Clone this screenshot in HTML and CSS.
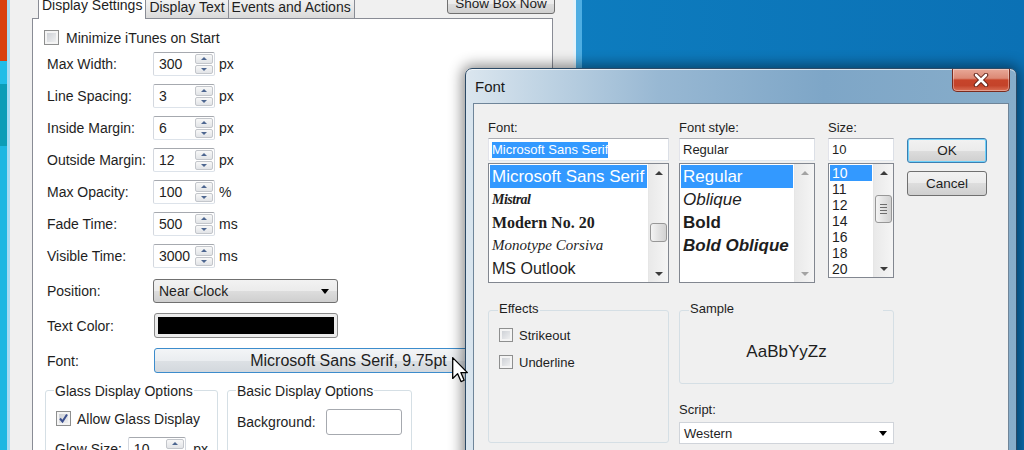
FILE: index.html
```html
<!DOCTYPE html>
<html lang="en">
<head>
    <meta charset="UTF-8">
    <meta name="viewport" content="width=device-width, initial-scale=1.0">
    <title>Display Settings - Font</title>
    <link rel="stylesheet" href="styles.css">
</head>
<body>
<div class="desktop">
    <div class="side-strip"></div>

    <div class="main-window">
        <div class="tab-row">
            <div class="tab active">Display Settings</div>
            <div class="tab">Display Text</div>
            <div class="tab">Events and Actions</div>
            <div class="btn show-box">Show Box Now</div>
        </div>
        <div class="tab-panel">
            <div class="check-row"><span class="checkbox"></span><span>Minimize iTunes on Start</span></div>
            <div class="field-row">
                <span class="field-label">Max Width:</span>
                <span class="spin"><span class="spin-value">300</span><span class="spin-buttons"><i class="up"></i><i class="down"></i></span></span>
                <span class="unit">px</span>
            </div>
            <div class="field-row">
                <span class="field-label">Line Spacing:</span>
                <span class="spin"><span class="spin-value">3</span><span class="spin-buttons"><i class="up"></i><i class="down"></i></span></span>
                <span class="unit">px</span>
            </div>
            <div class="field-row">
                <span class="field-label">Inside Margin:</span>
                <span class="spin"><span class="spin-value">6</span><span class="spin-buttons"><i class="up"></i><i class="down"></i></span></span>
                <span class="unit">px</span>
            </div>
            <div class="field-row">
                <span class="field-label">Outside Margin:</span>
                <span class="spin"><span class="spin-value">12</span><span class="spin-buttons"><i class="up"></i><i class="down"></i></span></span>
                <span class="unit">px</span>
            </div>
            <div class="field-row">
                <span class="field-label">Max Opacity:</span>
                <span class="spin"><span class="spin-value">100</span><span class="spin-buttons"><i class="up"></i><i class="down"></i></span></span>
                <span class="unit">%</span>
            </div>
            <div class="field-row">
                <span class="field-label">Fade Time:</span>
                <span class="spin"><span class="spin-value">500</span><span class="spin-buttons"><i class="up"></i><i class="down"></i></span></span>
                <span class="unit">ms</span>
            </div>
            <div class="field-row">
                <span class="field-label">Visible Time:</span>
                <span class="spin"><span class="spin-value">3000</span><span class="spin-buttons"><i class="up"></i><i class="down"></i></span></span>
                <span class="unit">ms</span>
            </div>
            <div class="field-row gap-lg">
                <span class="field-label">Position:</span>
                <span class="combo"><span>Near Clock</span><i class="drop-arrow"></i></span>
            </div>
            <div class="field-row tall">
                <span class="field-label">Text Color:</span>
                <span class="swatch"><span class="swatch-fill"></span></span>
            </div>
            <div class="field-row tall">
                <span class="field-label">Font:</span>
                <span class="btn font-btn">Microsoft Sans Serif, 9.75pt</span>
            </div>

            <div class="group-row">
                <div class="group glass">
                    <span class="group-title">Glass Display Options</span>
                    <div class="check-row">
                        <span class="checkbox"><svg width="13" height="13" viewBox="0 0 13 13"><path d="M3 6.5 L5.5 9.5 L10 2.5" fill="none" stroke="#3b4f8e" stroke-width="2"/></svg></span>
                        <span>Allow Glass Display</span>
                    </div>
                    <div class="field-row">
                        <span class="glow-label">Glow Size:</span>
                        <span class="spin narrow"><span class="spin-value">10</span><span class="spin-buttons"><i class="up"></i><i class="down"></i></span></span>
                        <span class="unit wide">px</span>
                    </div>
                </div>
                <div class="group basic">
                    <span class="group-title">Basic Display Options</span>
                    <div class="field-row">
                        <span class="bg-label">Background:</span>
                        <span class="textbox bg-box"></span>
                    </div>
                </div>
            </div>
        </div>
    </div>

    <div class="font-dialog">
        <div class="title-bar">
            <span class="title">Font</span>
            <span class="close-btn">
                <svg width="20" height="14" viewBox="0 0 20 14">
                    <path d="M5 2 L15 12 M15 2 L5 12" stroke="#5b1c12" stroke-width="4.5" stroke-linecap="round"/>
                    <path d="M5 2 L15 12 M15 2 L5 12" stroke="#ffffff" stroke-width="2.6" stroke-linecap="round"/>
                </svg>
            </span>
        </div>
        <div class="client">
            <div class="top-section">
                <div class="col col-font">
                    <div class="dlg-label">Font:</div>
                    <div class="dlg-input"><span class="sel-text">Microsoft Sans Serif</span></div>
                    <div class="listbox">
                        <div class="list-items">
                            <div class="item selected">Microsoft Sans Serif</div>
                            <div class="item f-mistral">Mistral</div>
                            <div class="item f-modern">Modern No. 20</div>
                            <div class="item f-corsiva">Monotype Corsiva</div>
                            <div class="item f-outlook">MS Outlook</div>
                        </div>
                        <div class="scrollbar">
                            <span class="sb-btn"><i class="sb-up"></i></span>
                            <span class="sb-track"><span class="sb-thumb font-thumb"></span></span>
                            <span class="sb-btn"><i class="sb-down"></i></span>
                        </div>
                    </div>
                </div>

                <div class="col col-style">
                    <div class="dlg-label">Font style:</div>
                    <div class="dlg-input">Regular</div>
                    <div class="listbox">
                        <div class="list-items">
                            <div class="item selected">Regular</div>
                            <div class="item s-oblique">Oblique</div>
                            <div class="item s-bold">Bold</div>
                            <div class="item s-bold s-oblique">Bold Oblique</div>
                        </div>
                        <div class="scrollbar disabled">
                            <span class="sb-btn"><i class="sb-up"></i></span>
                            <span class="sb-track"></span>
                            <span class="sb-btn"><i class="sb-down"></i></span>
                        </div>
                    </div>
                </div>

                <div class="col col-size">
                    <div class="dlg-label">Size:</div>
                    <div class="dlg-input">10</div>
                    <div class="listbox size-list">
                        <div class="list-items">
                            <div class="item selected">10</div>
                            <div class="item">11</div>
                            <div class="item">12</div>
                            <div class="item">14</div>
                            <div class="item">16</div>
                            <div class="item">18</div>
                            <div class="item">20</div>
                        </div>
                        <div class="scrollbar">
                            <span class="sb-btn"><i class="sb-up"></i></span>
                            <span class="sb-track"><span class="sb-thumb size-thumb"><b></b><b></b><b></b><b></b></span></span>
                            <span class="sb-btn"><i class="sb-down"></i></span>
                        </div>
                    </div>
                </div>

                <div class="col col-buttons">
                    <div class="btn dlg-btn default">OK</div>
                    <div class="btn dlg-btn">Cancel</div>
                </div>
            </div>

            <div class="bottom-section">
                <div class="group effects">
                    <span class="group-title">Effects</span>
                    <div class="check-row"><span class="checkbox small"></span><span>Strikeout</span></div>
                    <div class="check-row"><span class="checkbox small"></span><span>Underline</span></div>
                </div>
                <div class="sample-col">
                    <div class="group sample">
                        <span class="group-title">Sample</span>
                        <div class="sample-text">AaBbYyZz</div>
                    </div>
                    <div class="dlg-label script-label">Script:</div>
                    <div class="script-select"><span>Western</span><i class="drop-arrow"></i></div>
                </div>
            </div>
        </div>
    </div>

    <svg class="cursor" width="17" height="26" viewBox="0 0 13 20">
        <path d="M0.5 0.5 L0.5 16.5 L4.3 12.8 L6.9 18.9 L9.3 17.9 L6.8 12 L11.8 12 Z" fill="#ffffff" stroke="#000000" stroke-width="1" stroke-linejoin="round"/>
    </svg>
</div>
</body>
</html>
```

FILE: styles.css
```css
* {
    box-sizing: border-box;
}

body {
    margin: 0;
    font-family: "Liberation Sans", Arial, sans-serif;
    font-size: 14px;
    color: #1e1e1e;
}

.desktop {
    position: relative;
    width: 1024px;
    height: 450px;
    overflow: hidden;
    background: linear-gradient(90deg, #1189ca 0%, #0e80c2 40%, #0b71b5 100%);
}

.side-strip {
    position: absolute;
    left: 0;
    top: 0;
    width: 8px;
    height: 100%;
    background: linear-gradient(#d9410f 0, #d9410f 61px, #22bde7 61px, #22bde7 84px, #0c9db7 84px, #0c9db7 146px, #1db7e2 146px);
}

/* main settings window */
.main-window {
    position: absolute;
    left: 7px;
    top: -10px;
    width: 569px;
    height: 470px;
    display: flex;
    flex-direction: column;
    padding: 0 20px 0 22px;
    background: #f0f0f0;
    border-left: 3px solid #a9dbf2;
    border-right: 3px solid #e6f3fa;
    box-shadow: 6px 0 0 #4eaee3;
}

.tab-row {
    position: relative;
    z-index: 1;
    display: flex;
    align-items: flex-end;
    height: 28px;
    padding-left: 6px;
    flex-shrink: 0;
}

.tab {
    height: 21px;
    padding: 0 3px;
    margin-left: -1px;
    line-height: 18px;
    border: 1px solid #898c95;
    border-bottom: none;
    border-radius: 2px 2px 0 0;
    background: linear-gradient(#f4f4f4, #e8e8e8 50%, #d9d9d9);
    white-space: nowrap;
}

.tab.active {
    height: 25px;
    margin-left: 0;
    margin-bottom: -1px;
    line-height: 21px;
    background: #fff;
}

.btn {
    border: 1px solid #707070;
    border-radius: 3px;
    background: linear-gradient(#f2f2f2 0, #ebebeb 50%, #dddddd 50%, #cfcfcf 100%);
    text-align: center;
    white-space: nowrap;
}

.show-box {
    align-self: flex-start;
    width: 108px;
    height: 20px;
    margin: 4px -2px 0 auto;
    line-height: 17px;
    font-size: 13.5px;
}

.tab-panel {
    flex: 1;
    background: #fff;
    border: 1px solid #898c95;
    padding: 11px 0 0 14px;
}

.check-row {
    display: flex;
    align-items: center;
    gap: 7px;
    height: 15px;
    margin-left: -3px;
}

.checkbox {
    width: 15px;
    height: 15px;
    display: flex;
    align-items: center;
    justify-content: center;
    border: 1px solid #8e8f8f;
    background: linear-gradient(135deg, #c6cad0, #f6f6f6);
    box-shadow: inset 0 0 0 2px #f4f4f4;
}

.checkbox.small {
    width: 14px;
    height: 14px;
}

.field-row {
    display: flex;
    align-items: center;
    height: 24px;
    margin-top: 8px;
}

.check-row + .field-row {
    margin-top: 7px;
}

.field-row.gap-lg {
    margin-top: 11px;
}

.field-row.tall {
    height: 25px;
    margin-top: 10px;
}

.field-label {
    width: 106px;
}

.textbox,
.spin {
    height: 24px;
    background: #fff;
    border: 1px solid;
    border-color: #a6a9af #d4d8df #dde3ea #d4d8df;
    border-radius: 2px;
}

.spin {
    display: flex;
    width: 62px;
}

.spin.narrow {
    width: 60px;
}

.spin-value {
    flex: 1;
    padding-left: 5px;
    line-height: 22px;
}

.spin-buttons {
    width: 19px;
    display: flex;
    flex-direction: column;
    gap: 1px;
    padding: 1px 1px 1px 0;
}

.spin-buttons i {
    flex: 1;
    display: flex;
    align-items: center;
    justify-content: center;
    border: 1px solid #c3c6cb;
    border-radius: 2px;
    background: linear-gradient(#f8f8f8, #e2e4e7);
}

.spin-buttons .up::after {
    content: "";
    border-left: 3px solid transparent;
    border-right: 3px solid transparent;
    border-bottom: 3px solid #4d6690;
}

.spin-buttons .down::after {
    content: "";
    border-left: 3px solid transparent;
    border-right: 3px solid transparent;
    border-top: 3px solid #4d6690;
}

.unit {
    margin-left: 4px;
}

.unit.wide {
    margin-left: 7px;
}

.combo {
    width: 185px;
    height: 24px;
    display: flex;
    align-items: center;
    justify-content: space-between;
    padding: 0 8px 0 5px;
    border: 1px solid #707070;
    border-radius: 3px;
    background: linear-gradient(#f2f2f2 0, #ebebeb 50%, #dddddd 50%, #cfcfcf 100%);
}

.drop-arrow {
    border-left: 4px solid transparent;
    border-right: 4px solid transparent;
    border-top: 5px solid #000;
}

.swatch {
    width: 184px;
    height: 25px;
    margin-left: 1px;
    padding: 3px;
    border: 1px solid #8a8a8a;
    border-radius: 3px;
    background: #ececec;
    display: flex;
}

.swatch-fill {
    flex: 1;
    background: #000;
}

.font-btn {
    width: 389px;
    height: 25px;
    margin-left: 1px;
    line-height: 23px;
    font-size: 16px;
    border-color: #3c8ccc;
    background: linear-gradient(#f3f5f7 0, #eaedf0 50%, #dde1e5 50%, #d3d8dd 100%);
}

.group-row {
    display: flex;
    gap: 9px;
    margin: 17px 0 0 -2px;
}

.group {
    height: 80px;
    padding: 0 9px;
    border: 1px solid #d5dfe5;
    border-radius: 3px;
}

.group-title {
    display: table;
    margin-top: -8px;
    padding: 0 1px;
    margin-left: -1px;
    line-height: 16px;
    background: #fff;
}

.group.glass {
    width: 173px;
}

.group.basic {
    width: 185px;
}

.glass .check-row {
    margin: 12px 0 0 1px;
    gap: 6px;
}

.glass .field-row {
    margin-top: 11px;
}

.glow-label {
    width: 75px;
}

.basic .field-row {
    height: 26px;
    margin-top: 10px;
}

.bg-label {
    width: 90px;
}

.bg-box {
    width: 76px;
    height: 26px;
    border-color: #a6a9af;
    border-radius: 3px;
}

/* font dialog */
.font-dialog {
    position: absolute;
    left: 465px;
    top: 68px;
    width: 552px;
    height: 400px;
    display: flex;
    flex-direction: column;
    padding: 0 7px;
    border: 1px solid #2c4a66;
    border-radius: 7px 7px 0 0;
    background: linear-gradient(90deg, #dbe6ef 0, #c3d6e5 12%, #98b8d3 35%, #7ea6c7 65%, #87adca 100%);
    box-shadow: inset 0 1px 0 rgba(255, 255, 255, 0.7), 0 0 14px 3px rgba(0, 0, 0, 0.45);
}

.title-bar {
    height: 34px;
    display: flex;
    justify-content: space-between;
    padding-left: 2px;
    flex-shrink: 0;
}

.title {
    align-self: center;
    font-size: 15px;
    color: #1a1a1a;
}

.close-btn {
    width: 58px;
    height: 23px;
    margin-right: -1px;
    display: flex;
    align-items: center;
    justify-content: center;
    border: 1px solid #7a2c1f;
    border-top: none;
    border-radius: 0 0 5px 5px;
    background: linear-gradient(#e8a898 0, #dc8975 42%, #c7442a 50%, #c4432a 75%, #d96f55 100%);
    box-shadow: inset 0 0 0 1px rgba(255, 255, 255, 0.35);
}

.client {
    flex: 1;
    padding: 16px 0 0 14px;
    background: #f0f0f0;
    border: 1px solid #6f8599;
    font-size: 13px;
}

.top-section {
    display: flex;
}

.col-font {
    width: 181px;
}

.col-style {
    width: 136px;
    margin-left: 10px;
}

.col-size {
    width: 66px;
    margin-left: 13px;
}

.col-buttons {
    width: 80px;
    margin-left: 13px;
    padding-top: 18px;
}

.dlg-label {
    line-height: 16px;
    margin-bottom: 2px;
}

.dlg-input {
    height: 23px;
    margin-bottom: 2px;
    display: flex;
    align-items: center;
    padding-left: 3px;
    background: #fff;
    border: 1px solid;
    border-color: #abadb3 #dbdfe6 #e3e9ef #e2e3ea;
}

.sel-text {
    background: #3399ff;
    color: #fff;
    line-height: 16px;
}

.listbox {
    height: 120px;
    display: flex;
    background: #fff;
    border: 1px solid #828790;
}

.listbox.size-list {
    height: 115px;
}

.list-items {
    flex: 1;
    padding: 1px;
    overflow: hidden;
}

.item {
    height: 23px;
    line-height: 23px;
    padding-left: 2px;
    font-size: 17px;
    white-space: nowrap;
}

.item.selected {
    background: #3399ff;
    color: #fff;
}

.f-mistral {
    font-family: "Liberation Serif", serif;
    font-style: italic;
    font-weight: bold;
    font-size: 14px;
    letter-spacing: -0.5px;
}

.f-modern {
    font-family: "Liberation Serif", serif;
    font-weight: bold;
    font-size: 16px;
}

.f-corsiva {
    font-family: "Liberation Serif", serif;
    font-style: italic;
    font-size: 15px;
}

.f-outlook {
    font-size: 16px;
}

.s-oblique {
    font-style: italic;
}

.s-bold {
    font-weight: bold;
}

.size-list .item {
    height: 16px;
    line-height: 16px;
    font-size: 14px;
}

.scrollbar {
    width: 20px;
    display: flex;
    flex-direction: column;
    background: linear-gradient(90deg, #e9e9e9, #f5f5f5);
    border-left: 1px solid #e6e6e6;
}

.sb-btn {
    height: 17px;
    display: flex;
    align-items: center;
    justify-content: center;
}

.sb-up {
    border-left: 4px solid transparent;
    border-right: 4px solid transparent;
    border-bottom: 4px solid #3c3c3c;
}

.sb-down {
    border-left: 4px solid transparent;
    border-right: 4px solid transparent;
    border-top: 4px solid #3c3c3c;
}

.scrollbar.disabled .sb-up {
    border-bottom-color: #a3a3a3;
}

.scrollbar.disabled .sb-down {
    border-top-color: #a3a3a3;
}

.sb-track {
    flex: 1;
    padding: 0 1px;
}

.sb-thumb {
    display: flex;
    flex-direction: column;
    align-items: center;
    justify-content: center;
    gap: 2px;
    border: 1px solid #979797;
    border-radius: 3px;
    background: linear-gradient(90deg, #f4f4f4, #e2e2e2 50%, #d2d2d2);
}

.font-thumb {
    height: 19px;
    margin-top: 42px;
}

.size-thumb {
    height: 28px;
    margin-top: 14px;
}

.sb-thumb b {
    width: 7px;
    height: 1px;
    background: #6d6d6d;
}

.dlg-btn {
    height: 25px;
    line-height: 23px;
    font-size: 13.5px;
}

.dlg-btn.default {
    border-color: #3c7fb1;
    box-shadow: inset 0 0 0 1px #6fd2fb;
    margin-bottom: 8px;
}

.bottom-section {
    display: flex;
    margin-top: 27px;
}

.client .group-title {
    margin-top: -10px;
    background: #f0f0f0;
}

.group.effects {
    width: 181px;
    height: 133px;
    padding: 0 10px;
}

.effects .check-row {
    height: 14px;
    margin: 11px 0 0 0;
    gap: 6px;
}

.effects .check-row + .check-row {
    margin-top: 13px;
}

.sample-col {
    width: 215px;
    margin-left: 10px;
}

.group.sample {
    height: 74px;
    padding: 0 10px;
    display: flex;
    flex-direction: column;
}

.sample-text {
    flex: 1;
    display: flex;
    align-items: center;
    justify-content: center;
    padding-top: 3px;
    font-size: 17px;
}

.script-label {
    margin-top: 18px;
    margin-bottom: 4px;
}

.script-select {
    height: 22px;
    display: flex;
    align-items: center;
    justify-content: space-between;
    padding: 0 6px 0 4px;
    background: #fff;
    border: 1px solid #d0d4da;
}

.cursor {
    position: absolute;
    left: 452px;
    top: 357px;
}
```
